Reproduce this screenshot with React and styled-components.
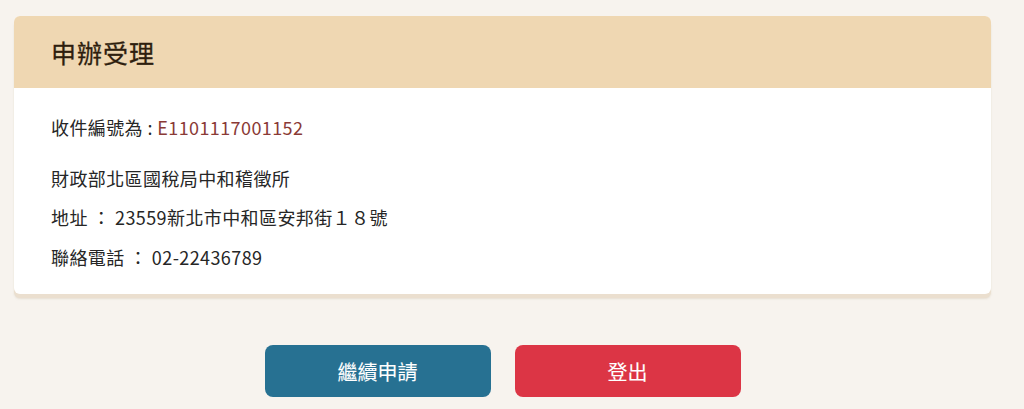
import React from "react";
import styled, { createGlobalStyle } from "styled-components";

const Global = createGlobalStyle`
  html, body { margin: 0; padding: 0; background: #f7f3ee; }
  body { font-family: "Noto Sans CJK TC", "Noto Sans", sans-serif; color: #2b2b2b; }
`;

const Page = styled.div`
  padding: 16px 33px 0 14px;
`;

const Card = styled.section`
  background: #fff;
  border-radius: 6px;
  overflow: hidden;
  box-shadow: 0 4px 0 #ebdfcf, 0 5px 2px rgba(200, 185, 160, 0.35);
`;

const CardHeader = styled.header`
  background: #efd7b2;
  height: 72px;
  display: flex;
  align-items: center;
  padding: 0 37px;
`;

const Title = styled.h2`
  margin: 0;
  font-size: 25px;
  font-weight: 400;
  color: #2e1e0e;
  letter-spacing: 1px;
  -webkit-text-stroke: 0.3px #2e1e0e;
`;

const CardBody = styled.div`
  padding: 25px 37px 23px;
  display: flex;
  flex-direction: column;
`;

const Line = styled.p`
  margin: 0;
  font-size: 18px;
  line-height: 28px;
  letter-spacing: 0.4px;
  color: #262626;
  margin-top: ${(p) => p.$gap || 0}px;
`;

const CaseNo = styled.span`
  color: #8a3a36;
`;

const Actions = styled.div`
  display: flex;
  justify-content: center;
  gap: 24px;
  margin-top: 51px;
`;

const Button = styled.button`
  width: 226px;
  height: 52px;
  border: none;
  border-radius: 8px;
  background: ${(p) => (p.$variant === "danger" ? "#dc3545" : "#277192")};
  color: #fff;
  font-family: inherit;
  font-size: 20px;
  font-weight: 400;
  -webkit-text-stroke: 0.1px #fff;
  cursor: pointer;
`;

export default function App() {
  return (
    <>
      <Global />
      <Page>
        <Card>
          <CardHeader>
            <Title>申辦受理</Title>
          </CardHeader>
          <CardBody>
            <Line>
              收件編號為 : <CaseNo>E1101117001152</CaseNo>
            </Line>
            <Line $gap={23}>財政部北區國稅局中和稽徵所</Line>
            <Line $gap={11}>地址 ： 23559新北市中和區安邦街１８號</Line>
            <Line $gap={12}>聯絡電話 ： 02-22436789</Line>
          </CardBody>
        </Card>
        <Actions>
          <Button>繼續申請</Button>
          <Button $variant="danger">登出</Button>
        </Actions>
      </Page>
    </>
  );
}
